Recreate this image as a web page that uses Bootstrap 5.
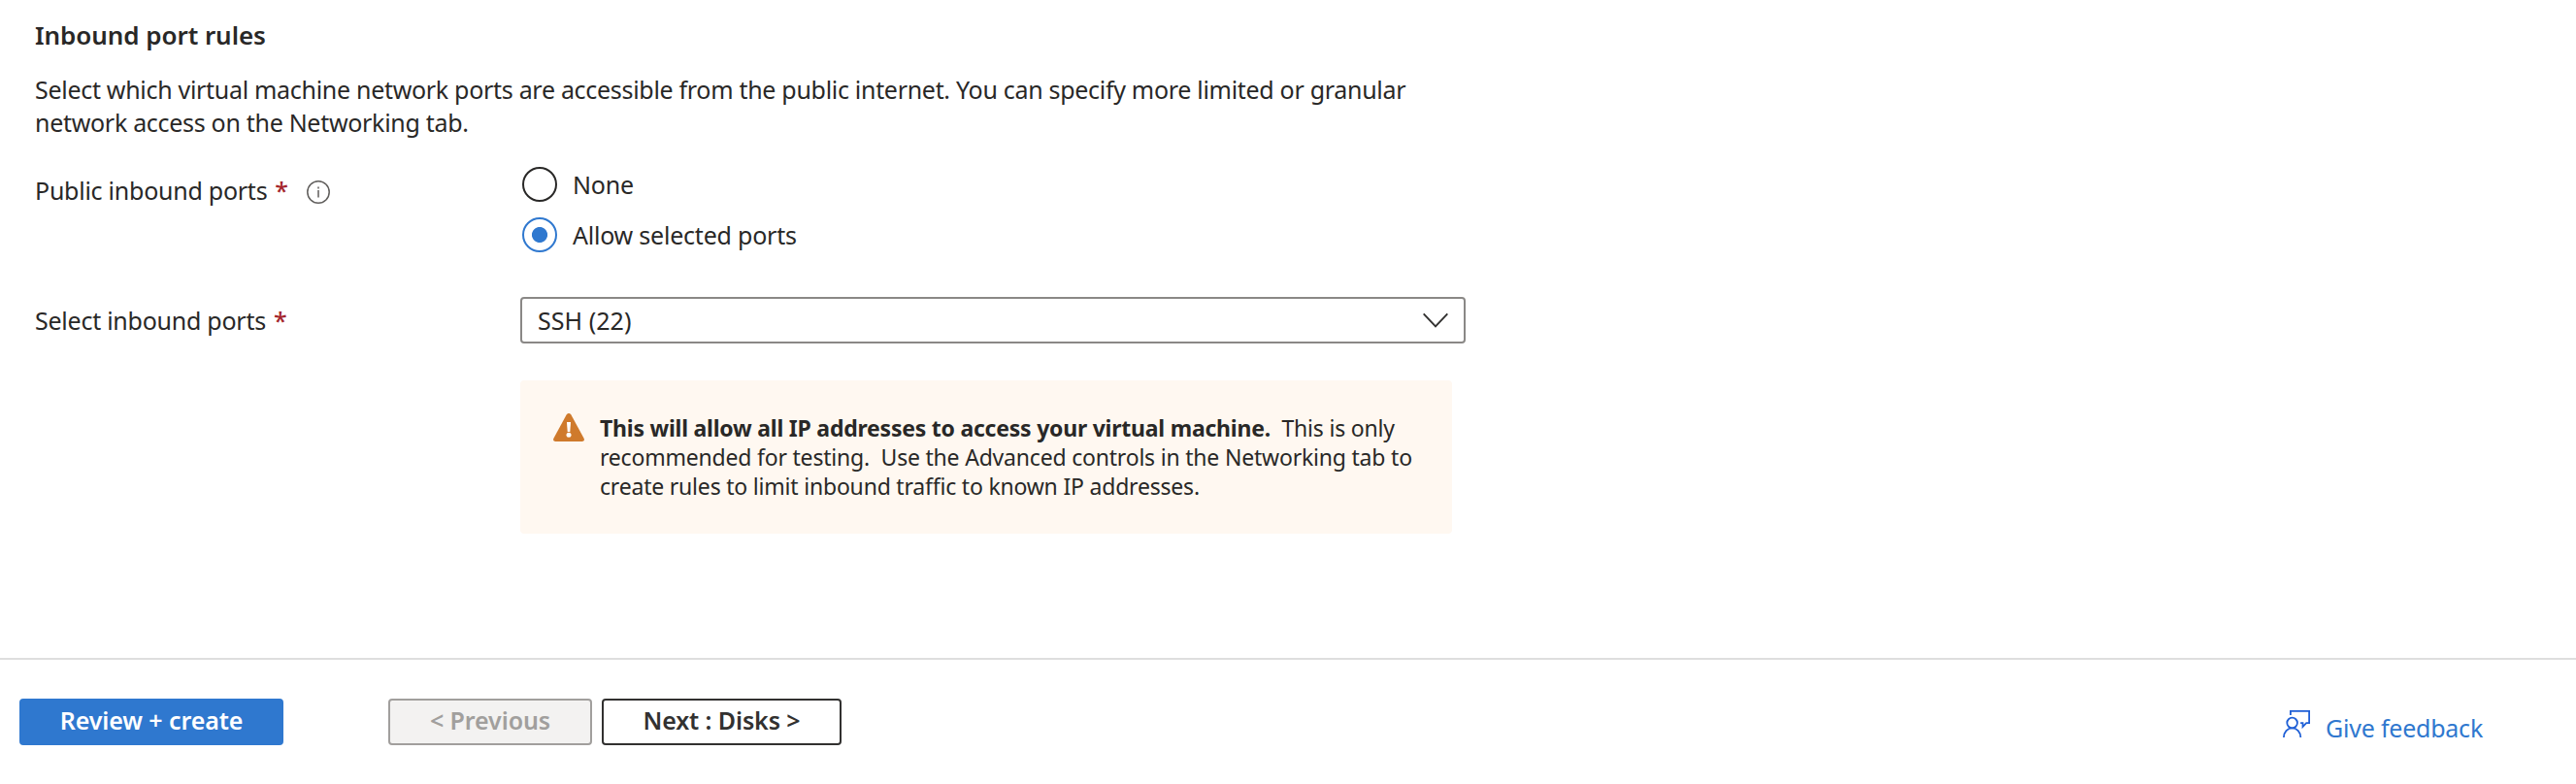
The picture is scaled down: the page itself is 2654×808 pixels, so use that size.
<!DOCTYPE html>
<html lang="en">
<head>
<meta charset="utf-8">
<meta name="viewport" content="width=device-width, initial-scale=1">
<title>Create a virtual machine</title>
<link href="https://cdn.jsdelivr.net/npm/bootstrap@5.3.0/dist/css/bootstrap.min.css" rel="stylesheet">
<style>
  body { font: 400 25px/34px "Noto Sans", "Open Sans", sans-serif; letter-spacing: -.3px; color: #292827; background: #fff; }
  .page-area { height: 678px; padding: 18px 36px 0; }
  .section-title { font-size: 26px; line-height: 36px; font-weight: 600; letter-spacing: -.06px; margin-bottom: 21px; }
  .field-row { display: grid; grid-template-columns: 500px 974px; }
  .field-name { padding-top: 7px; letter-spacing: -.25px; }
  .ports-name { margin-top: 29px; }
  .ports-name svg { margin: 7px 0 0 19px; }
  .req { color: #a4262c; font-weight: 500; margin-left: 8px; }
  .radio-group { display: grid; gap: 16px; margin-top: 29px; letter-spacing: -.22px; }
  .radio-line { height: 36px; padding-left: 2px; gap: 16px; }
  .radio-line .form-check-input { width: 36px; height: 36px; margin: 0; border: 2px solid #292827; box-shadow: none; background-color: #fff; }
  .radio-line .form-check-input:checked { border-color: #2f78cf; background: radial-gradient(circle at center, #2f78cf 7.6px, #fff 8.4px); }
  .select-row { margin-top: 46px; }
  .port-select { height: 48px; border: 2px solid #8a8886; border-radius: 4px; padding: 0 16px; }
  .port-select span { letter-spacing: .05px; }
  .warn { width: 960px; height: 158px; margin-top: 38px; padding: 34px; gap: 16px; background: #fff8f1; border-radius: 4px; font-size: 23px; line-height: 30px; letter-spacing: -.2px; }
  .warn b { font-weight: 700; letter-spacing: -.23px; }
  .foot { height: 130px; border-top: 2px solid #dedede; padding: 40px 96px 0 20px; }
  .foot .btn { height: 48px; padding: 0 0 4px; border-width: 2px; border-radius: 4px; font-size: 25px; line-height: 40px; font-weight: 600; letter-spacing: -.1px; }
  .btn-create, .btn-create:hover { width: 272px; margin-right: 108px; background: #2f78cf; border-color: #2f78cf; color: #fff; }
  .foot .btn-prev { width: 210px; margin-right: 10px; background: #f3f2f1; border-color: #a19f9d; color: #a19f9d; opacity: 1; }
  .btn-next { width: 247px; background: #fff; border-color: #323130; color: #323130; }
  .feedback { color: #2f78cf; gap: 16px; padding-top: 12px; letter-spacing: -.23px; }
  .feedback span { margin-top: 1px; }
  svg { display: block; flex: none; }
</style>
</head>
<body>
<main class="page-area">
  <h2 class="section-title">Inbound port rules</h2>
  <p class="mb-0 text-nowrap">Select which virtual machine network ports are accessible from the public internet. You can specify more limited or granular<br>network access on the Networking tab.</p>

  <div class="field-row">
    <div class="field-name ports-name d-flex">
      <span>Public inbound ports</span><span class="req">*</span>
      <svg width="24" height="24" viewBox="0 0 24 24" fill="none" stroke="#605e5c" stroke-width="1.5"><circle cx="12" cy="12" r="11.2"/><path d="M12 10v7.6M12 6.4v2"/></svg>
    </div>
    <div class="radio-group">
      <label class="radio-line d-flex align-items-center"><input class="form-check-input" type="radio" name="ports"><span>None</span></label>
      <label class="radio-line d-flex align-items-center"><input class="form-check-input" type="radio" name="ports" checked><span>Allow selected ports</span></label>
    </div>
  </div>

  <div class="field-row select-row">
    <div class="field-name">Select inbound ports<span class="req">*</span></div>
    <div>
      <div class="port-select d-flex align-items-center justify-content-between">
        <span>SSH (22)</span>
        <svg width="26" height="16" viewBox="0 0 26 16" fill="none" stroke="#323130" stroke-width="1.9"><path d="M.7 1.3 13 14.3 25.3 1.3"/></svg>
      </div>
      <div class="warn d-flex text-nowrap" role="alert">
        <svg width="32" height="30" viewBox="0 0 32 30"><path d="M13.6 1.4Q16-1.4 18.4 1.4L31.6 25.8Q32.6 29 29.6 29H2.4Q-.6 29 .4 25.8Z" fill="#cf7a2c"/><path d="M14 9h4l-.7 10h-2.6z" fill="#fff"/><circle cx="16" cy="22.3" r="2.5" fill="#fff"/></svg>
        <div><b>This will allow all IP addresses to access your virtual machine.</b>&nbsp; This is only<br>recommended for testing.&nbsp; Use the Advanced controls in the Networking tab to<br>create rules to limit inbound traffic to known IP addresses.</div>
      </div>
    </div>
  </div>
</main>

<footer class="foot d-flex align-items-start">
  <button class="btn btn-create" type="button">Review + create</button>
  <button class="btn btn-prev" type="button" disabled>&lt; Previous</button>
  <button class="btn btn-next" type="button">Next : Disks &gt;</button>
  <a class="feedback d-flex ms-auto text-decoration-none" href="#">
    <svg width="28" height="28" viewBox="0 0 28 28" fill="none" stroke="#1f5fd6" stroke-width="1.8"><path d="M7.9 5V.9h19.2v12.2h-2.9l-3.7 3.9v-3.9h-2.4"/><circle cx="9.6" cy="13" r="5.3"/><path d="M.9 28c0-5.5 3.9-9.7 8.7-9.7s8.7 4.2 8.7 9.7"/></svg>
    <span>Give feedback</span>
  </a>
</footer>
<script src="https://cdn.jsdelivr.net/npm/bootstrap@5.3.0/dist/js/bootstrap.bundle.min.js"></script>
</body>
</html>
